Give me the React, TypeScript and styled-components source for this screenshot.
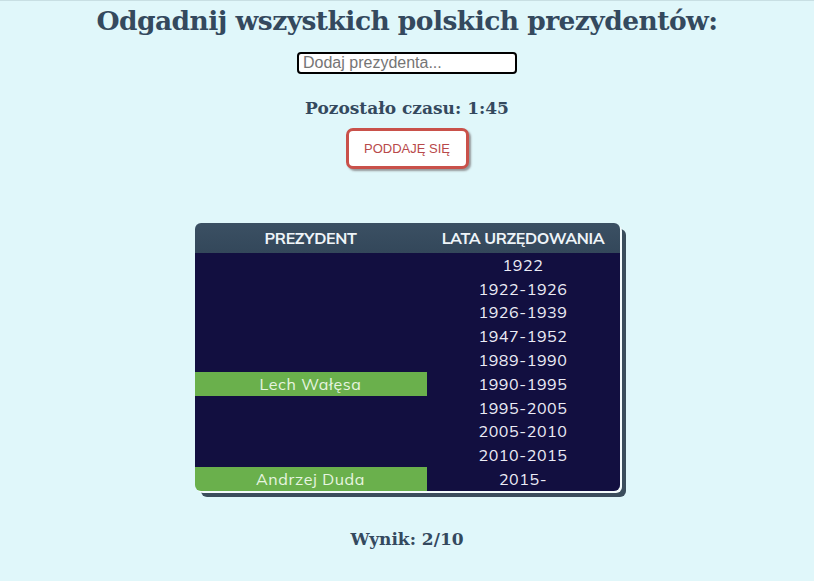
import React from "react";
import styled, { createGlobalStyle } from "styled-components";

const Global = createGlobalStyle`
  html, body { margin: 0; padding: 0; }
  body {
    background: #e0f7fa;
    font-family: "DejaVu Serif", serif;
    color: #2c3e50;
    min-height: 581px;
  }
`;

const Page = styled.div`
  display: flex;
  flex-direction: column;
  align-items: center;
  padding-top: 2px;
  border-top: 1px solid #c8dfe3;
`;

const Title = styled.h1`
  margin: 0;
  font-family: "DejaVu Serif", serif;
  font-size: 26.5px;
  font-weight: 700;
  letter-spacing: -0.55px;
  color: #34495e;
  line-height: 36px;
`;

const Input = styled.input`
  margin-top: 13px;
  width: 220px;
  height: 22px;
  box-sizing: border-box;
  border: 2px solid #000;
  border-radius: 4px;
  background: #fff;
  padding: 0 4px;
  font-family: "Liberation Sans", Arial, sans-serif;
  font-size: 16px;
  outline: none;
  &::placeholder { color: #757575; }
`;

const Timer = styled.div`
  margin-top: 22px;
  font-size: 17px;
  font-weight: 700;
  color: #34495e;
  line-height: 24px;
`;

const GiveUp = styled.button`
  margin-top: 8px;
  width: 123px;
  height: 41px;
  box-sizing: border-box;
  background: #fff;
  border: 3px solid #c9514a;
  border-radius: 7px;
  box-shadow: 2px 2px 2px rgba(60, 40, 40, 0.45);
  color: #b8494a;
  font-family: "Liberation Sans", Arial, sans-serif;
  font-size: 13px;
  cursor: pointer;
`;

const TableWrap = styled.div`
  margin-top: 54px;
  width: 425px;
  border-radius: 6px;
  overflow: hidden;
  box-shadow: 2px 2px 0 #f4fbfc, 6px 6px 0 #3b4d5c;
`;

const Table = styled.table`
  width: 100%;
  border-collapse: collapse;
  font-family: "Mulish", "Lato", sans-serif;
`;

const HeadCell = styled.th`
  background: linear-gradient(#3b5063, #33475a);
  color: #eef4f8;
  font-weight: 700;
  font-size: 16px;
  text-transform: uppercase;
  letter-spacing: -0.4px;
  height: 30px;
  padding: 0;
  &:first-child { width: 232px; }
`;

const Cell = styled.td<{ $guessed?: boolean }>`
  height: 23.8px;
  padding: 0;
  text-align: center;
  font-size: 16px;
  letter-spacing: 0.6px;
  color: ${(p) => (p.$guessed ? "#e7f5e0" : "#ececf6")};
  background: ${(p) => (p.$guessed ? "#6ab04c" : "#120f40")};
`;

const Score = styled.div`
  margin-top: 38px;
  font-size: 17px;
  font-weight: 700;
  color: #34495e;
`;

const rows: [string, string][] = [
  ["", "1922"],
  ["", "1922-1926"],
  ["", "1926-1939"],
  ["", "1947-1952"],
  ["", "1989-1990"],
  ["Lech Wałęsa", "1990-1995"],
  ["", "1995-2005"],
  ["", "2005-2010"],
  ["", "2010-2015"],
  ["Andrzej Duda", "2015-"],
];

export default function App() {
  return (
    <>
      <Global />
      <Page>
        <Title>Odgadnij wszystkich polskich prezydentów:</Title>
        <Input placeholder="Dodaj prezydenta..." />
        <Timer>Pozostało czasu: 1:45</Timer>
        <GiveUp>PODDAJĘ SIĘ</GiveUp>
        <TableWrap>
          <Table>
            <thead>
              <tr>
                <HeadCell>Prezydent</HeadCell>
                <HeadCell>Lata urzędowania</HeadCell>
              </tr>
            </thead>
            <tbody>
              {rows.map(([name, years]) => (
                <tr key={years}>
                  <Cell $guessed={!!name}>{name}</Cell>
                  <Cell>{years}</Cell>
                </tr>
              ))}
            </tbody>
          </Table>
        </TableWrap>
        <Score>Wynik: 2/10</Score>
      </Page>
    </>
  );
}
